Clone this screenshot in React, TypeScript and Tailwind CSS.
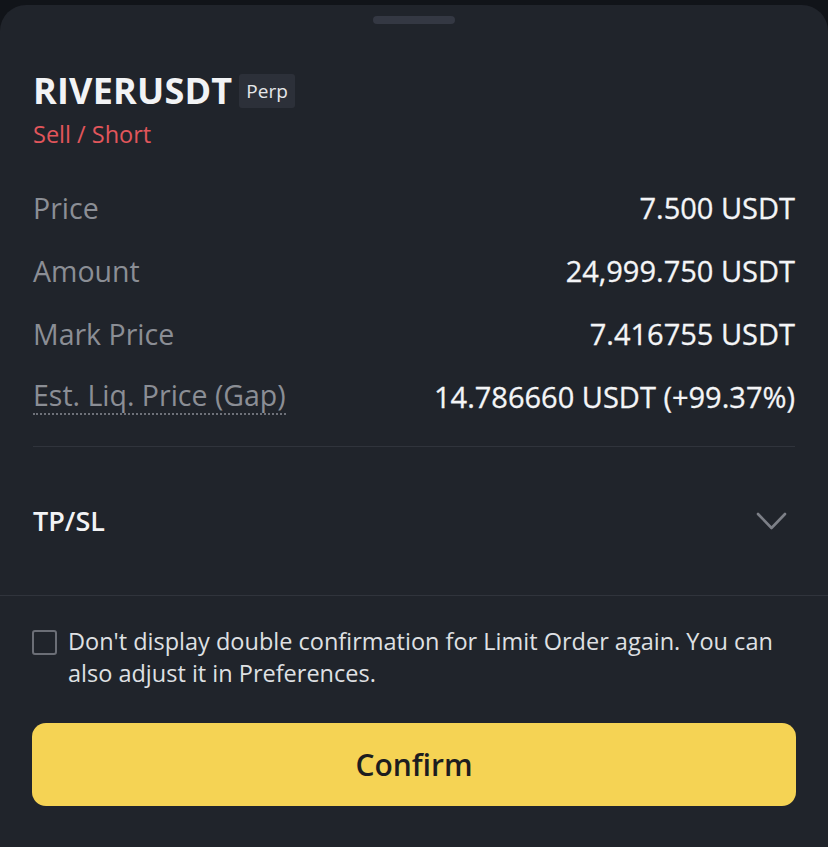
const rows = [
  { label: "Price", value: "7.500 USDT" },
  { label: "Amount", value: "24,999.750 USDT" },
  { label: "Mark Price", value: "7.416755 USDT" },
  { label: "Est. Liq. Price (Gap)", value: "14.786660 USDT (+99.37%)", dotted: true },
];

export default function App() {
  return (
    <div
      className="h-[847px] w-[828px] overflow-hidden bg-[#111419] pt-[5px]"
      style={{ fontFamily: "'Open Sans', 'Liberation Sans', sans-serif" }}
    >
      <div className="h-[842px] rounded-t-[26px] bg-[#20242b]">
        <div className="flex justify-center pt-[11px]">
          <div className="h-[8px] w-[82px] rounded-full bg-[#343843]" />
        </div>

        <div className="px-[33px] pt-[49px]">
          <div className="flex items-center gap-[7px]">
            <span className="text-[36px] font-bold leading-[36px] tracking-[0.2px] text-[#f2f3f5]">RIVERUSDT</span>
            <span className="rounded-[3px] bg-[#2c3039] px-[7px] py-[3px] text-[19px] leading-[28px] text-[#e6e7ea]">
              Perp
            </span>
          </div>
          <div className="mt-[10px] text-[23.5px] leading-[30px] text-[#e2565b]">Sell / Short</div>

          <div className="mt-[27px] flex flex-col">
            {rows.map((r) => (
              <div key={r.label} className="flex h-[63px] items-center justify-between">
                <span
                  className={
                    r.dotted
                      ? "border-b-2 border-dotted border-[#6e7179] pb-[2px] text-[28.5px] leading-[32px] text-[#8b8e95]"
                      : "text-[28.5px] leading-[32px] text-[#8b8e95]"
                  }
                >
                  {r.label}
                </span>
                <span className="text-[29px] leading-[32px] text-[#f4f5f7] [-webkit-text-stroke:0.3px_#f4f5f7]">
                  {r.value}
                </span>
              </div>
            ))}
          </div>

          <div className="mt-[18px] h-px bg-[#30343c]" />

          <div className="flex h-[148px] items-center justify-between">
            <span className="text-[27px] font-semibold text-[#f2f3f5]">TP/SL</span>
            <svg width="31" height="19" viewBox="0 0 31 19" fill="none" className="mr-[8px]">
              <polyline
                points="2,2 15.5,16 29,2"
                stroke="#7c7f87"
                strokeWidth="2.6"
                strokeLinecap="round"
                strokeLinejoin="round"
              />
            </svg>
          </div>
        </div>

        <div className="h-px bg-[#30343c]" />

        <div className="px-[32px] pt-[29px]">
          <div className="flex items-start gap-[11px]">
            <div className="mt-[5px] h-[25px] w-[25px] shrink-0 rounded-[3px] border-2 border-[#6b6e76]" />
            <p className="text-[23.5px] leading-[32px] text-[#dfe0e3]">
              Don't display double confirmation for Limit Order again. You can also adjust it in Preferences.
            </p>
          </div>

          <button
            type="button"
            className="mt-[34px] flex h-[83px] w-full items-center justify-center rounded-[14px] bg-[#f5d354] text-[30px] font-semibold text-[#1d1d1f]"
          >
            Confirm
          </button>
        </div>
      </div>
    </div>
  );
}
